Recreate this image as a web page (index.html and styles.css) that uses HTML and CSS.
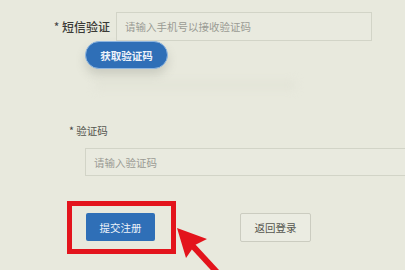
FILE: index.html
```html
<!DOCTYPE html>
<html lang="zh">
<head>
<meta charset="utf-8">
<link rel="stylesheet" href="styles.css">
</head>
<body>
<div class="page">
  <div class="row-sms">
    <label class="label-sms"><span class="star">*</span> 短信验证</label>
    <div class="input input-sms">请输入手机号以接收验证码</div>
  </div>
  <button class="btn-code">获取验证码</button>
  <div class="blur-line"></div>
  <div class="label-code"><span class="star">*</span> 验证码</div>
  <div class="input input-code">请输入验证码</div>
  <div class="actions">
    <div class="highlight">
      <button class="btn-submit">提交注册</button>
    </div>
    <button class="btn-back">返回登录</button>
  </div>
  <svg class="arrow" viewBox="0 0 405 270" width="405" height="270">
    <line x1="190" y1="243" x2="226" y2="282" stroke="#e3141c" stroke-width="6"/>
    <polygon points="177,228 207,239 195,245 186,258" fill="#e3141c"/>
  </svg>
</div>
</body>
</html>
```
FILE: styles.css
```css
html, body {
  margin: 0;
  padding: 0;
  background: #e8e9dd;
}
.page {
  position: relative;
  width: 405px;
  height: 270px;
  overflow: hidden;
  padding-top: 12px;
  box-sizing: border-box;
  font-family: "Noto Sans CJK SC", "Noto Sans", sans-serif;
}
.row-sms {
  display: flex;
  align-items: center;
}
.label-sms {
  width: 110px;
  margin-right: 6px;
  text-align: right;
  font-size: 12px;
  font-weight: 500;
  color: #3a3a36;
}
.star {
  color: #444;
  font-weight: 400;
}
.input {
  box-sizing: border-box;
  border: 1px solid #d2d4c7;
  background: #e9eadf;
  color: #9a9b94;
  font-size: 10.5px;
  display: flex;
  align-items: center;
}
.input-sms {
  width: 256px;
  height: 29px;
  padding-left: 8px;
}
.btn-code {
  display: block;
  margin-left: 85px;
  width: 83px;
  height: 28px;
  border: 1px solid #8fb6e0;
  border-radius: 14px;
  background: #2f6fb7;
  color: #eef3fa;
  font-family: inherit;
  font-size: 10.5px;
  font-weight: 700;
  padding: 0;
  box-shadow: 0 6px 10px rgba(120, 125, 110, 0.25);
}
.blur-line {
  margin: 12px 0 0 95px;
  width: 200px;
  height: 8px;
  background: #dcddd0;
  filter: blur(5px);
  opacity: 0.5;
}
.label-code {
  margin: 35px 0 0 69px;
  font-size: 10.5px;
  color: #555650;
  line-height: 14px;
}
.input-code {
  margin: 10px 0 0 85px;
  width: 345px;
  height: 28px;
  padding-left: 8px;
}
.actions {
  display: flex;
  align-items: center;
  margin-top: 25px;
}
.highlight {
  margin-left: 67px;
  width: 109px;
  height: 53px;
  box-sizing: border-box;
  border: 5px solid #e3141c;
  padding: 7px 0 0 14px;
}
.btn-submit {
  display: block;
  width: 69px;
  height: 28px;
  border: none;
  border-radius: 2px;
  background: #2f6fb7;
  color: #eef3fa;
  font-family: inherit;
  font-size: 10.5px;
  padding: 0;
}
.btn-back {
  margin-left: 64px;
  margin-top: -1px;
  width: 71px;
  height: 29px;
  box-sizing: border-box;
  border: 1px solid #cbccc0;
  border-radius: 2px;
  background: #ebece2;
  color: #55564f;
  font-family: inherit;
  font-size: 10.5px;
  padding: 0;
}
.arrow {
  position: absolute;
  left: 0;
  top: 0;
  pointer-events: none;
}
```
